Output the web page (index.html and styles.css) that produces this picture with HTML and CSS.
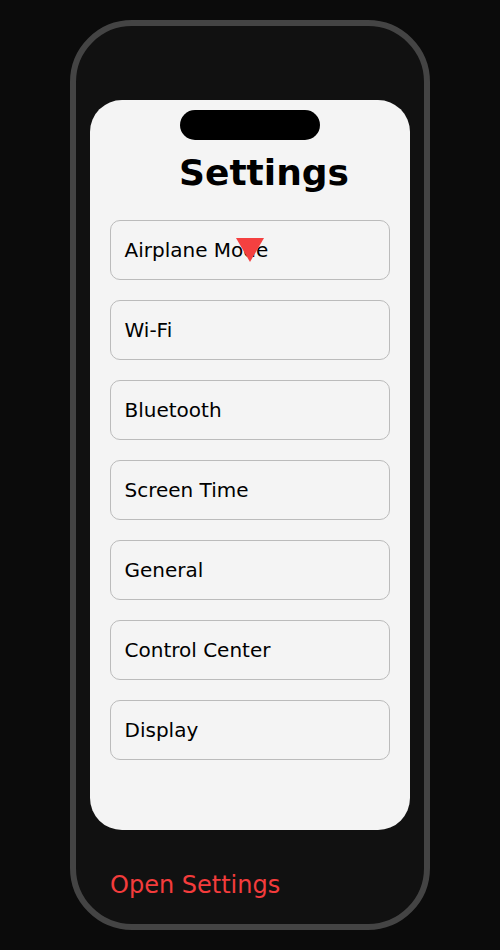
FILE: index.html
```html
<!DOCTYPE html>
<html lang="en">
<head>
    <meta charset="UTF-8">
    <meta name="viewport" content="width=device-width, initial-scale=1.0">
    <title>Settings</title>
    <link rel="stylesheet" href="styles.css">
</head>
<body>

<div class="phone">
    <div class="screen">
        <div class="notch"></div>
        <h1 class="title">Settings</h1>
        <div class="list">
            <div class="row">Airplane Mode<span class="pointer"></span></div>
            <div class="row">Wi-Fi</div>
            <div class="row">Bluetooth</div>
            <div class="row">Screen Time</div>
            <div class="row">General</div>
            <div class="row">Control Center</div>
            <div class="row">Display</div>
        </div>
    </div>
    <div class="open-link">Open Settings</div>
</div>

</body>
</html>
```

FILE: styles.css
```css
/* General styling */
body {
    margin: 0;
    padding: 0;
    background-color: #0b0b0b;
    font-family: "DejaVu Sans", Arial, sans-serif;
}

/* Phone frame */
.phone {
    box-sizing: border-box;
    width: 360px;
    height: 910px;
    margin: 20px auto 0;
    padding: 74px 14px 0;
    background-color: #111;
    border: 6px solid #444;
    border-radius: 62px;
}

.screen {
    height: 730px;
    padding-top: 10px;
    box-sizing: border-box;
    background-color: #f4f4f4;
    border-radius: 32px;
}

.notch {
    width: 140px;
    height: 30px;
    margin: 0 auto;
    background-color: #000;
    border-radius: 15px;
}

.title {
    margin: 11px 0 0;
    padding-left: 28px;
    font-size: 36px;
    line-height: 43px;
    font-weight: bold;
    text-align: center;
    color: #000;
}

/* Settings rows */
.list {
    display: flex;
    flex-direction: column;
    gap: 20px;
    margin: 26px 20px 0;
}

.row {
    position: relative;
    display: flex;
    align-items: center;
    box-sizing: border-box;
    height: 60px;
    padding: 0 13.5px;
    border: 1.5px solid #bbb;
    border-radius: 10px;
    font-size: 20px;
    color: #000;
}

.pointer {
    position: absolute;
    left: 124.5px;
    top: 16.5px;
    width: 0;
    height: 0;
    border-left: 14px solid transparent;
    border-right: 14px solid transparent;
    border-top: 24px solid #f44040;
}

.open-link {
    margin-top: 41px;
    padding-left: 20px;
    font-size: 24px;
    line-height: 28px;
    color: #f43c3c;
}
```
